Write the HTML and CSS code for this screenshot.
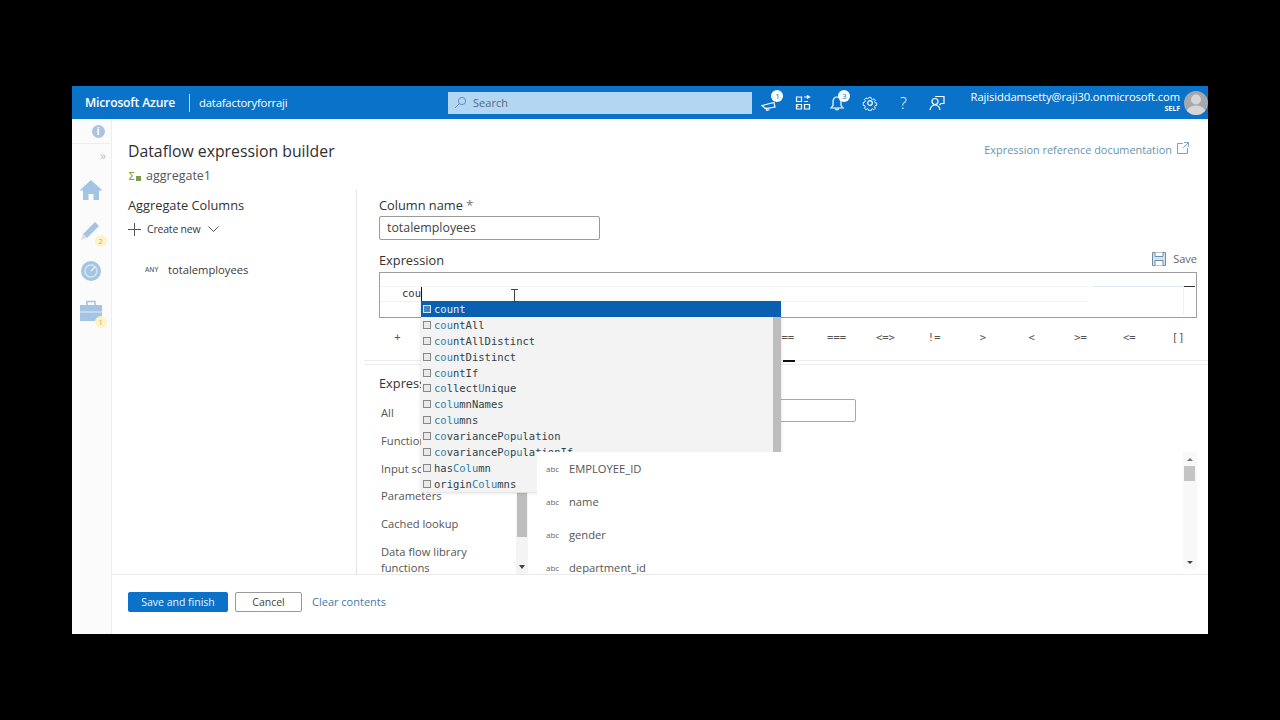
FILE: index.html
```html
<!DOCTYPE html>
<html>
<head>
    <title>Dataflow expression builder</title>
    <link rel="stylesheet" href="styles.css">
</head>
<body>
    <div class="portal">
        <header class="topbar">
            <span class="brand">Microsoft Azure</span>
            <span class="tenant">datafactoryforraji</span>
            <div class="search">
                <svg width="13" height="13" viewBox="0 0 13 13" fill="none" stroke="#5b8fc4" stroke-width="1"><circle cx="8" cy="5" r="3.6"/><path d="M5.3 7.7 1 12"/></svg>
                <span>Search</span>
            </div>
            <div class="top-icons">
                <span class="top-icon">
                    <svg width="20" height="20" viewBox="0 0 20 20" fill="none" stroke="#fff" stroke-width="1.2"><path d="M2 12.5 14 9.5l1 4.5-9.500 1.500zM6 15l1 2.500 2.500-1"/></svg>
                    <b class="count-badge">1</b>
                </span>
                <span class="top-icon">
                    <svg width="16" height="16" viewBox="0 0 16 16" fill="none" stroke="#fff" stroke-width="1.2"><path d="M1.500 2h5v4.500h-5zM1.500 9.500h5V14h-5zM9.500 9.500h5V14h-5zM9 2h5.500M9 6.500h4M12 .5l2.500 1.500-2.500 1.500M3.500 11.500l-2-.5"/></svg>
                </span>
                <span class="top-icon">
                    <svg width="20" height="20" viewBox="0 0 20 20" fill="none" stroke="#fff" stroke-width="1.2"><path d="M10 4c-3 0-4 2.500-4 5v3.500L4 15h12l-2-2.500V9c0-2.500-1-5-4-5zM8.500 15.500c0 2 3 2 3 0"/></svg>
                    <b class="count-badge">3</b>
                </span>
                <span class="top-icon">
                    <svg width="16" height="16" viewBox="0 0 16 16" fill="none" stroke="#fff" stroke-width="1.2"><circle cx="8" cy="8" r="2.300"/><path d="M6.700 1h2.600l.4 2 1.500.7 1.800-1 1.800 1.900-1 1.700.6 1.500 2 .5v2.500l-2 .5-.6 1.500 1 1.700-1.800 1.800-1.800-1-1.500.6-.4 2H6.700l-.5-2-1.500-.6-1.700 1-1.900-1.800 1-1.700-.6-1.500-2-.5V7.300l2-.5.6-1.500-1-1.700L3 1.700l1.700 1 1.500-.7z" transform="translate(1.600 1.600) scale(.8)"/></svg>
                </span>
                <span class="top-icon help">?</span>
                <span class="top-icon">
                    <svg width="16" height="16" viewBox="0 0 16 16" fill="none" stroke="#fff" stroke-width="1.2"><circle cx="6" cy="6.500" r="3"/><path d="M1 15c.5-3 2-5 5-5s4.500 2 5 5M6 1.500h9v7h-3l-1.500 1.500"/></svg>
                </span>
            </div>
            <div class="account">
                <span class="account-mail">Rajisiddamsetty@raji30.onmicrosoft.com</span>
                <span class="account-dir">SELF</span>
            </div>
            <span class="avatar">
                <svg width="24" height="24" viewBox="0 0 24 24" fill="#d6d6d6"><circle cx="12" cy="8.500" r="5"/><path d="M2 24c0-6 4-9.500 10-9.500S22 18 22 24z"/></svg>
            </span>
        </header>

        <div class="workspace">
            <nav class="rail">
                <div class="rail-info"><span class="info-dot">i</span></div>
                <div class="rail-collapse">&raquo;</div>
                <svg class="rail-icon" width="24" height="22" viewBox="0 0 24 22" fill="#a3c4e3"><path d="M12 1 .5 11.500h3.500V21h5.500v-6h5v6H20v-9.500h3.500z"/></svg>
                <span class="rail-item">
                    <svg width="24" height="24" viewBox="0 0 24 24"><path d="M4 16 16 4l4 4L8 20z" fill="#a3c4e3"/><path d="M4 16l-2 6 6-2z" fill="#d8e0e6"/></svg>
                    <b class="rail-badge">2</b>
                </span>
                <svg class="rail-icon" width="22" height="22" viewBox="0 0 22 22" fill="none"><circle cx="11" cy="11" r="10" fill="#a3c4e3"/><circle cx="11" cy="11" r="6" stroke="#d5e4f2" stroke-width="1.500"/><path d="M11 11l4-4" stroke="#e8f0f8" stroke-width="1.500"/></svg>
                <span class="rail-item">
                    <svg width="24" height="24" viewBox="0 0 24 24" fill="#a3c4e3"><path d="M1 6h22v16H1z"/><path d="M8 6V2.500h8V6" fill="none" stroke="#a3c4e3" stroke-width="1.500"/><path d="M1 13h22" stroke="#e4eef7"/></svg>
                    <b class="rail-badge">1</b>
                </span>
            </nav>

            <main class="builder">
                <div class="builder-head">
                    <div>
                        <h1>Dataflow expression builder</h1>
                        <div class="subtitle">
                            <svg width="14" height="12" viewBox="0 0 14 12"><text x="0" y="10" class="sigma">&Sigma;</text><path d="M8 6h5v5H8z" fill="#7f9a4a"/></svg>
                            <span>aggregate1</span>
                        </div>
                    </div>
                    <a class="doc-link">Expression reference documentation
                        <svg width="12" height="12" viewBox="0 0 12 12" fill="none" stroke="#7fa3bf"><path d="M6 1.500H.5v10h10V6M7 .5h4.500V5M11.500 .5 6 6"/></svg>
                    </a>
                </div>

                <div class="builder-body">
                    <section class="columns-pane">
                        <h2>Aggregate Columns</h2>
                        <div class="create-new">
                            <svg width="13" height="13" viewBox="0 0 13 13" stroke="#555" fill="none"><path d="M6.500 0v13M0 6.500h13"/></svg>
                            <span>Create new</span>
                            <svg width="11" height="7" viewBox="0 0 11 7" stroke="#555" fill="none"><path d="M.5 .5l5 5 5-5"/></svg>
                        </div>
                        <div class="column-row"><span class="type-any">ANY</span><span>totalemployees</span></div>
                    </section>

                    <section class="editor-pane">
                        <label class="field-label">Column name <em>*</em></label>
                        <div class="text-box">totalemployees</div>

                        <div class="expr-head">
                            <span class="field-label">Expression</span>
                            <span class="save">
                                <svg width="14" height="14" viewBox="0 0 14 14" fill="#d5e3ee" stroke="#6f8fa8"><path d="M.5 .5h13v13H.5z"/><path d="M3 .5v4h8v-4M3 13.500V8.500h8v5" fill="#fff"/></svg>
                                Save
                            </span>
                        </div>
                        <div class="expr-box">
                            <div class="expr-line"><span class="typed">cou</span><span class="caret"></span></div>
                            <div class="expr-rule"></div>
                            <div class="minimap"><i></i></div>
                        </div>

                        <div class="operators">
                            <span>+</span><span></span><span></span><span></span><span></span><span></span><span></span><span></span>
                            <span>==</span><span>===</span><span>&lt;=&gt;</span><span>!=</span><span>&gt;</span><span>&lt;</span><span>&gt;=</span><span>&lt;=</span><span>[]</span>
                        </div>
                        <div class="tab-line"><i></i></div>

                        <div class="elements-title">Expression elements</div>
                        <div class="elements">
                            <ul class="element-types">
                                <li>All</li>
                                <li>Functions</li>
                                <li>Input schema</li>
                                <li>Parameters</li>
                                <li>Cached lookup</li>
                                <li>Data flow library functions</li>
                            </ul>
                            <div class="types-scroll"><i></i><b></b></div>
                            <div class="element-values">
                                <div class="filter-box"></div>
                                <div class="value-list">
                                    <div class="value-row"><span class="type-abc">abc</span>EMPLOYEE_ID</div>
                                    <div class="value-row"><span class="type-abc">abc</span>name</div>
                                    <div class="value-row"><span class="type-abc">abc</span>gender</div>
                                    <div class="value-row"><span class="type-abc">abc</span>department_id</div>
                                    <div class="values-scroll"><b></b><i></i><u></u></div>
                                </div>
                            </div>
                        </div>

                        <div class="suggest">
                            <div class="suggest-item active"><span class="fn-icon"></span>count</div>
                            <div class="suggest-item"><span class="fn-icon"></span><span class="m">cou</span>ntAll</div>
                            <div class="suggest-item"><span class="fn-icon"></span><span class="m">cou</span>ntAllDistinct</div>
                            <div class="suggest-item"><span class="fn-icon"></span><span class="m">cou</span>ntDistinct</div>
                            <div class="suggest-item"><span class="fn-icon"></span><span class="m">cou</span>ntIf</div>
                            <div class="suggest-item"><span class="fn-icon"></span><span class="m">co</span>llect<span class="m">U</span>nique</div>
                            <div class="suggest-item"><span class="fn-icon"></span><span class="m">colu</span>mnNames</div>
                            <div class="suggest-item"><span class="fn-icon"></span><span class="m">colu</span>mns</div>
                            <div class="suggest-item"><span class="fn-icon"></span><span class="m">co</span>varianceP<span class="m">o</span>p<span class="m">u</span>lation</div>
                            <div class="suggest-item"><span class="fn-icon"></span><span class="m">co</span>varianceP<span class="m">o</span>p<span class="m">u</span>lationIf</div>
                            <div class="suggest-item"><span class="fn-icon"></span>has<span class="m">Colu</span>mn</div>
                            <div class="suggest-item"><span class="fn-icon"></span>origin<span class="m">Colu</span>mns</div>
                            <div class="suggest-scroll"></div>
                        </div>
                        <svg class="text-cursor" width="7" height="13" viewBox="0 0 7 13" fill="none" stroke="#444"><path d="M0 .5h7M0 12.500h7M3.500 .5v12"/></svg>
                    </section>
                </div>

                <footer class="builder-foot">
                    <button class="btn-primary">Save and finish</button>
                    <button class="btn-plain">Cancel</button>
                    <a class="clear-link">Clear contents</a>
                </footer>
            </main>
        </div>
    </div>
</body>
</html>
```

FILE: styles.css
```css
body { margin: 0; background: #000; font-family: "Open Sans", "Liberation Sans", sans-serif; color: #3a3a3a; }
.portal { width: 1136px; height: 548px; margin: 86px 0 0 72px; background: #fff; display: flex; flex-direction: column; overflow: hidden; }

/* top bar */
.topbar { height: 33px; background: #0a72c8; color: #fff; display: flex; align-items: center; font-size: 12px; flex: none; }
.brand { font-weight: 600; font-size: 12.2px; margin-left: 13px; padding-right: 14px; border-right: 1px solid #b9d8f0; line-height: 18px; letter-spacing: -.2px; }
.tenant { margin-left: 9px; width: 249px; font-size: 11.3px; letter-spacing: -.2px; }
.search { width: 304px; height: 22px; background: #b3d6f3; color: #55697c; display: flex; align-items: center; gap: 6px; padding-left: 6px; box-sizing: border-box; font-size: 11px; }
.top-icons { display: flex; margin-left: 1px; }
.top-icon { width: 33.4px; height: 33px; display: flex; align-items: center; justify-content: center; position: relative; }
.top-icon.help { font-size: 16px; font-weight: 300; }
.count-badge { position: absolute; top: 4px; right: 3px; width: 12px; height: 12px; border-radius: 50%; background: #fff; color: #0a72c8; font-size: 8px; font-weight: 400; text-align: center; line-height: 12px; }
.account { margin-left: auto; display: flex; flex-direction: column; align-items: flex-end; line-height: 13px; }
.account-mail { font-size: 11.2px; letter-spacing: -.1px; }
.account-dir { font-size: 7px; font-weight: 700; line-height: 12px; }
.avatar { width: 24px; height: 24px; border-radius: 50%; background: #a5a8ac; margin-left: 4px; overflow: hidden; }

.workspace { flex: 1; display: flex; min-height: 0; }

/* left rail */
.rail { width: 39px; background: #fbfbfb; border-right: 1px solid #eeeeee; flex: none; display: flex; flex-direction: column; align-items: center; }
.rail-info { height: 25px; width: 100%; border-bottom: 1px solid #eeeeee; display: flex; justify-content: center; padding: 6px 0 0 13px; box-sizing: border-box; }
.info-dot { width: 13px; height: 13px; border-radius: 50%; background: #a9c3e0; color: #fff; font-size: 10px; font-weight: 700; text-align: center; line-height: 13px; }
.rail-collapse { align-self: flex-end; margin: 4px 5px 0 0; height: 31px; font-size: 12px; color: #c4c4c4; line-height: 16px; }
.rail-icon { margin-right: 2px; }
.rail-item { width: 24px; height: 24px; position: relative; display: block; margin: 17px 2px 0 0; }
.rail-item + .rail-icon { margin-top: 18px; }
.rail-badge { position: absolute; right: -4px; bottom: -5px; width: 12px; height: 12px; border-radius: 50%; background: #fdf3c9; color: #c9b26a; font-size: 8px; font-weight: 400; text-align: center; line-height: 12px; }

/* dialog */
.builder { flex: 1; display: flex; flex-direction: column; min-width: 0; }
.builder-head { height: 71px; flex: none; display: flex; justify-content: space-between; padding: 23px 19px 0 16px; box-sizing: border-box; }
h1 { font-size: 15.8px; font-weight: 500; margin: 0; line-height: 18px; color: #2f2f2f; }
.subtitle { display: flex; align-items: center; gap: 4px; font-size: 12.5px; color: #555; margin-top: 7px; line-height: 17px; }
.sigma { font-family: "DejaVu Sans", sans-serif; font-size: 11px; fill: #8a9a3a; }
.doc-link { font-size: 10.9px; color: #6a93ad; display: flex; gap: 5px; height: 16px; line-height: 16px; }

.builder-body { flex: 1; display: flex; min-height: 0; }
.columns-pane { width: 228px; margin-left: 16px; flex: none; border-right: 1px solid #e4e4e4; }
h2 { font-size: 12.8px; font-weight: 500; margin: 7px 0 0; line-height: 17px; color: #333; }
.create-new { display: flex; align-items: center; margin-top: 7px; font-size: 10.5px; letter-spacing: -.2px; color: #3a3a3a; height: 16px; }
.create-new span { margin: 0 8px 0 6px; }
.column-row { display: flex; align-items: center; margin: 25px 0 0 17px; font-size: 11.2px; line-height: 16px; color: #3a3a3a; }
.type-any { font-size: 6.5px; font-weight: 600; width: 23px; color: #666; }

.editor-pane { flex: 1; position: relative; padding-right: 11px; min-width: 0; overflow: hidden; }
.field-label { font-size: 12.8px; font-weight: 500; color: #333; line-height: 17px; margin-left: 22px; display: block; padding-top: 7px; }
.field-label em { font-style: normal; font-weight: 400; color: #777; }
.text-box { margin: 2px 0 0 22px; width: 212px; height: 22px; border: 1px solid #9a9a9a; border-radius: 2px; font-size: 12.4px; line-height: 22px; padding-left: 7px; color: #444; }
.expr-head { display: flex; justify-content: space-between; margin-top: 5px; }
.save { font-size: 11px; color: #666; display: flex; align-items: center; gap: 7px; padding-top: 3px; }
.expr-box { margin: 3px 0 0 22px; height: 44px; border: 1px solid #9e9e9e; position: relative; }
.expr-line { padding: 13px 0 0 22px; height: 16px; font-family: "DejaVu Sans Mono", monospace; font-size: 10.5px; line-height: 15px; display: flex; color: #333; }
.caret { width: 1.5px; height: 15px; background: #111; }
.expr-rule { position: absolute; left: 0; right: 108px; top: 13px; height: 14px; border-top: 1px solid #f3f3f3; border-bottom: 1px solid #f3f3f3; }
.minimap { position: absolute; right: 12px; top: 13px; width: 90px; height: 28px; border-top: 1px solid #dfe8ef; border-right: 1px solid #efefef; }
.minimap i { position: absolute; right: -12px; top: -1px; width: 11px; height: 1px; background: #333; }

.operators { margin: 11px 0 0 16px; height: 16px; display: flex; font-family: "DejaVu Sans Mono", monospace; font-size: 10.5px; line-height: 16px; color: #555; }
.operators span { width: 48.8px; text-align: center; flex: none; }
.tab-line { height: 3px; border-top: 1px solid #ececec; border-bottom: 1px solid #ececec; margin: 15px -11px 0 7px; position: relative; }
.tab-line i { position: absolute; left: 419px; top: -1px; width: 12px; height: 2px; background: #111; }

.elements-title { font-size: 12.8px; font-weight: 500; color: #333; line-height: 17px; margin: 10px 0 0 22px; }
.elements { display: flex; margin-left: 24px; }
.element-types { list-style: none; margin: 13px 0 0; padding: 0; width: 112px; font-size: 11.2px; color: #555; flex: none; }
.element-types li { line-height: 16px; margin-bottom: 11.8px; }
.types-scroll { width: 12px; height: 197px; margin: -15px 0 0 23px; background: #f4f4f4; position: relative; flex: none; }
.types-scroll i { position: absolute; left: 1px; top: 116px; width: 10px; height: 44px; background: #bdbdbd; }
.types-scroll b { position: absolute; left: 3px; bottom: 5px; border: 3px solid transparent; border-top: 4px solid #444; border-bottom: 0; }
.element-values { flex: 1; min-width: 0; position: relative; }
.filter-box { width: 326px; height: 21px; margin-top: 7px; border: 1px solid #a8a8a8; border-radius: 2px; background: #fff; }
.value-list { position: absolute; top: 60px; left: 9px; right: 0; height: 122px; background: #fff; z-index: 3; padding: 9px 0 0 9px; box-sizing: border-box; overflow: hidden; }
.value-row { font-size: 11.2px; line-height: 16px; height: 16px; margin-bottom: 17px; color: #555; display: flex; align-items: center; }
.type-abc { font-size: 8px; width: 23px; color: #666; }
.values-scroll { position: absolute; right: 0; top: 0; width: 14px; height: 117px; background: #f8f8f8; }
.values-scroll b { position: absolute; left: 4px; top: 6px; border: 3px solid transparent; border-bottom: 3px solid #777; border-top: 0; }
.values-scroll i { position: absolute; left: 1px; top: 14px; width: 11px; height: 15px; background: #c4c4c4; }
.values-scroll u { position: absolute; left: 4px; bottom: 5px; border: 3px solid transparent; border-top: 3px solid #444; border-bottom: 0; }

/* autocomplete, sits over the editor */
.suggest { position: absolute; left: 64px; top: 111px; width: 360px; height: 191px; background: #f3f3f3; z-index: 2; font-family: "DejaVu Sans Mono", monospace; font-size: 10.5px; box-shadow: 0 1px 3px rgba(0,0,0,.15); color: #2f3f4a; }
.suggest-item { height: 15.9px; line-height: 16px; display: flex; align-items: center; padding-left: 2px; }
.suggest-item .m { color: #2f7fae; }
.suggest-item.active { background: #0a5fb0; color: #e6f2fb; position: relative; z-index: 1; }
.fn-icon { width: 6px; height: 6px; border: 1px solid #888; background: #e9e9e9; margin: 0 3px 0 0; flex: none; }
.suggest-item.active .fn-icon { border-color: #cfe3f5; background: #3f86c8; }
.suggest-scroll { position: absolute; right: 0; top: 16px; width: 8px; height: 135px; background: #bdbdbd; }
.text-cursor { position: absolute; left: 154px; top: 99px; z-index: 4; }

/* footer */
.builder-foot { height: 60px; flex: none; border-top: 1px solid #ebebeb; box-sizing: border-box; display: flex; align-items: center; padding: 0 0 6px 16px; position: relative; z-index: 5; background: #fff; }
button { font-family: inherit; font-size: 10.5px; height: 20px; border-radius: 2px; padding: 0; cursor: pointer; }
.btn-primary { width: 100px; background: #0a72c8; color: #e8f3fb; border: none; }
.btn-plain { width: 67px; margin-left: 7px; background: #fff; border: 1px solid #9a9a9a; color: #444; }
.clear-link { margin-left: 10px; color: #3f7ba8; font-size: 11px; }
```
